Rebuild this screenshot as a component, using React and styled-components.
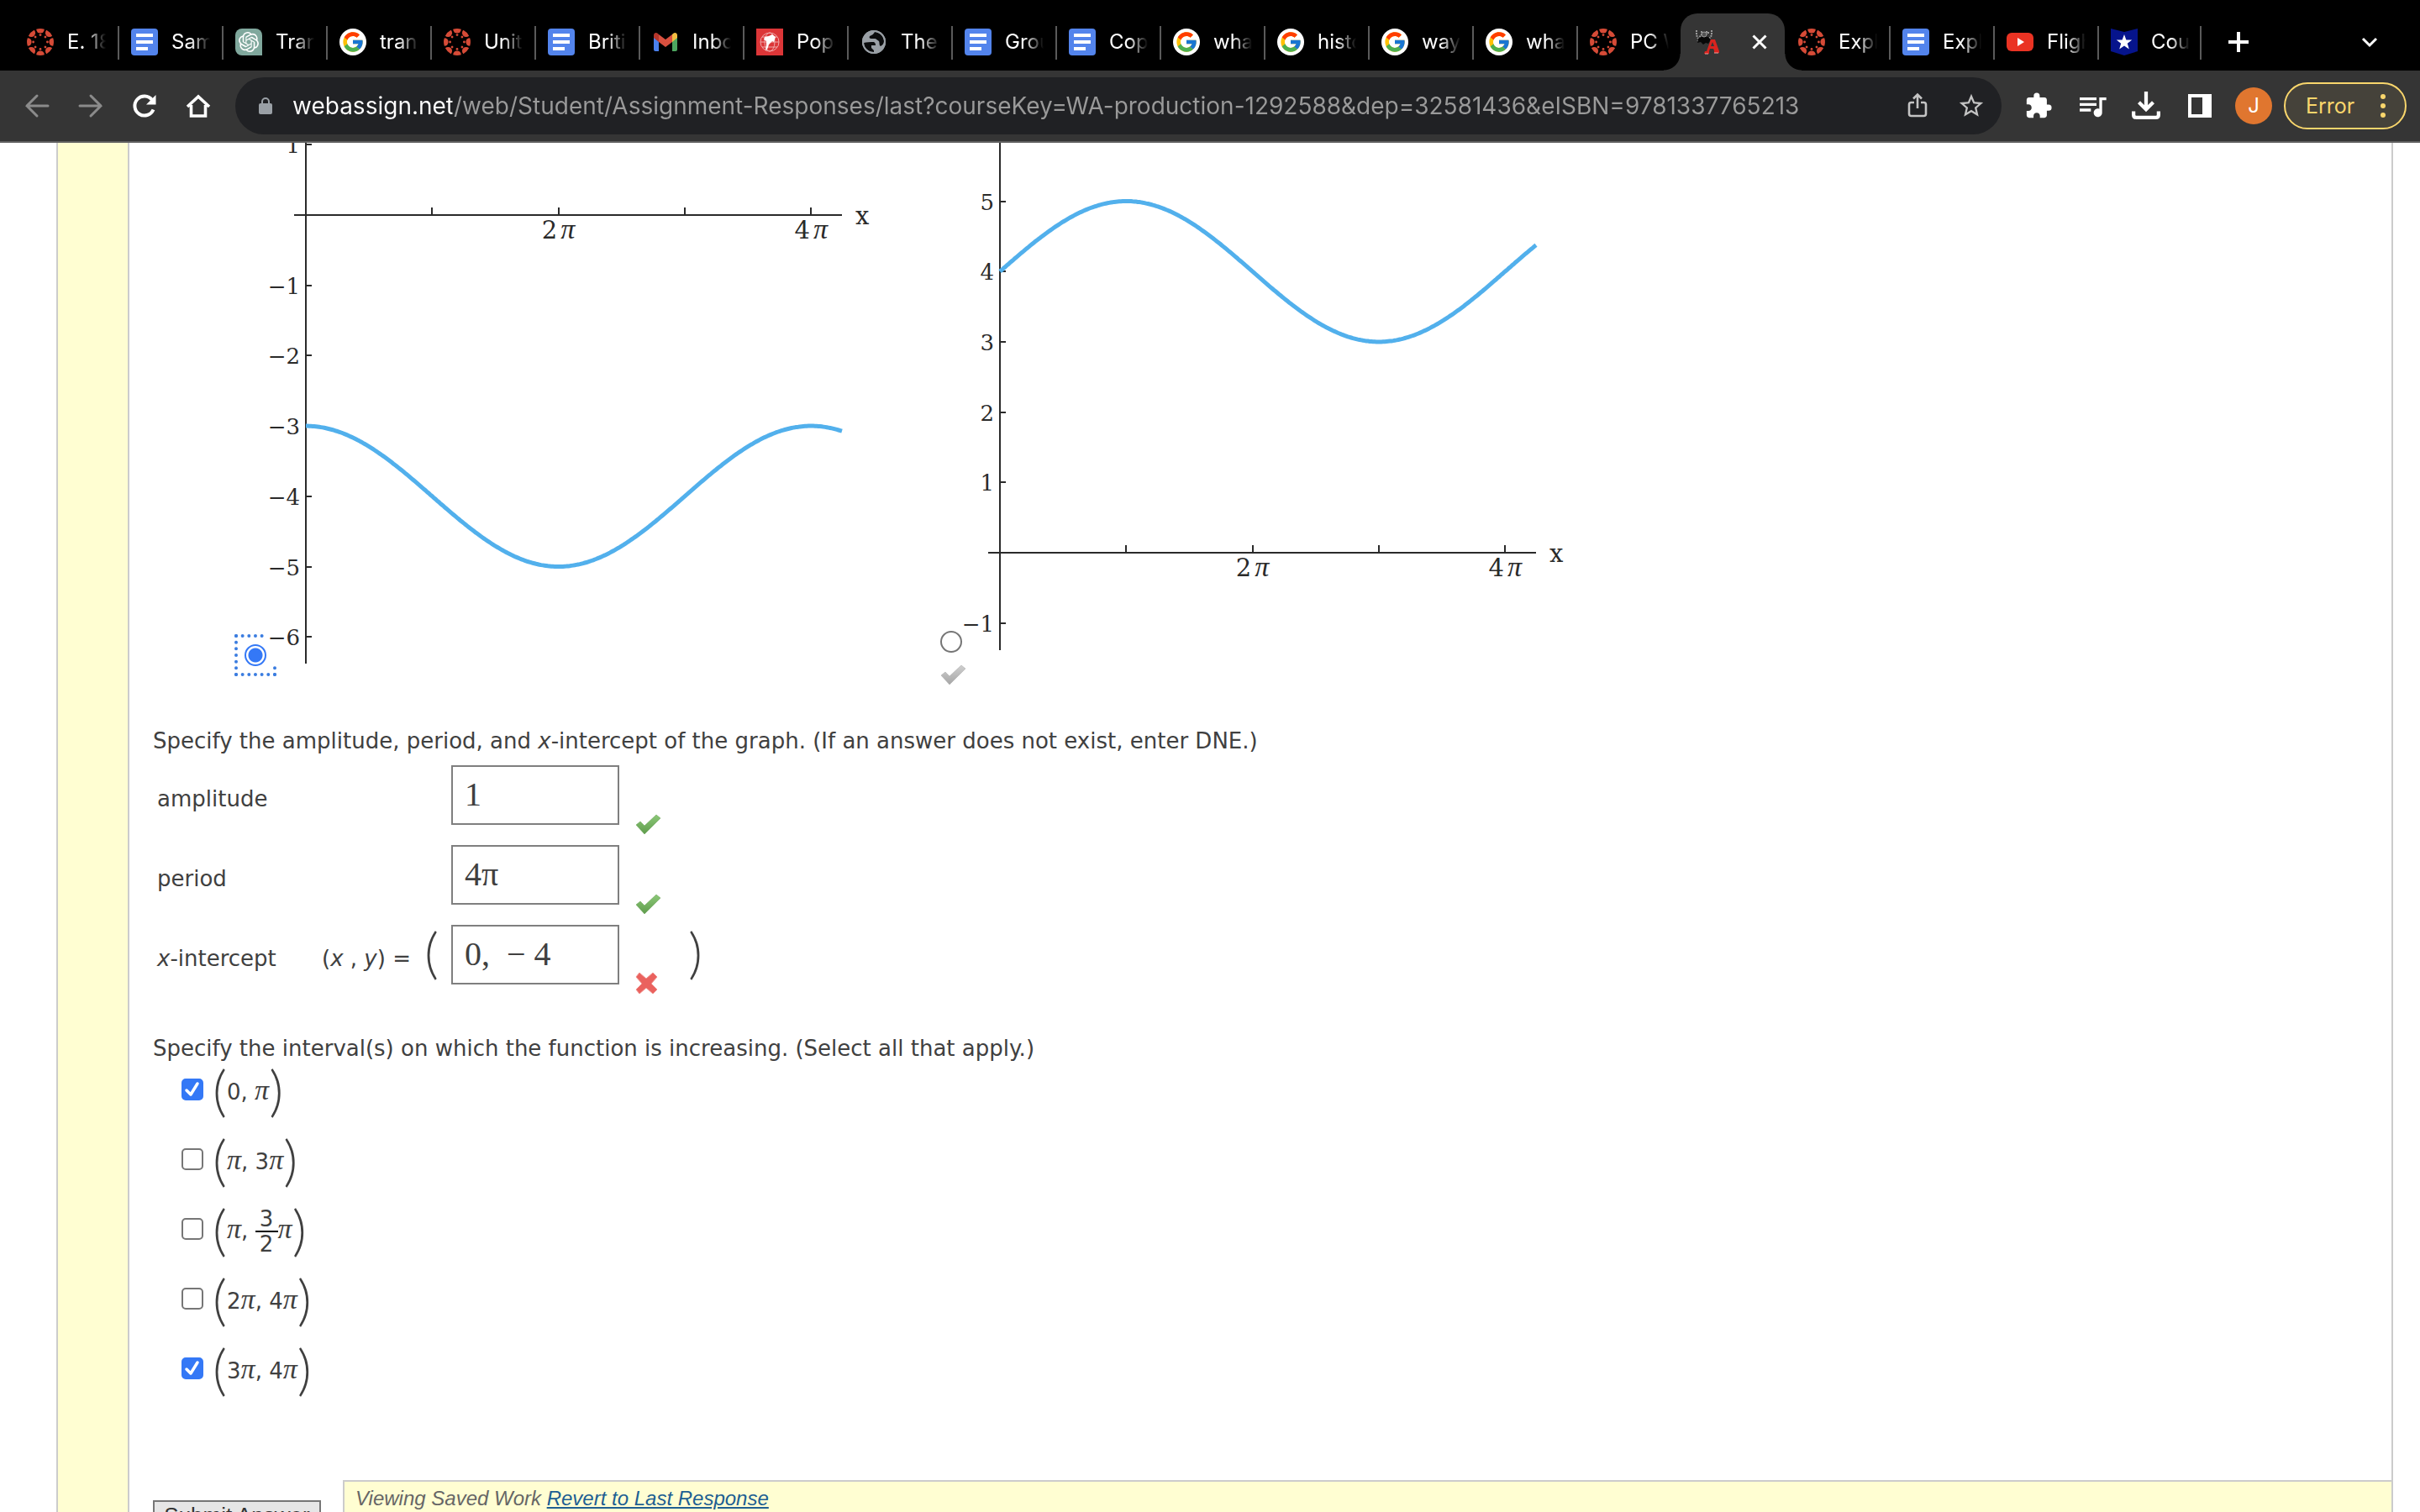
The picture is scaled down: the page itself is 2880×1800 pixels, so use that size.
import React, { useId } from "react";
import styled, { createGlobalStyle } from "styled-components";
import { FcGoogle } from "react-icons/fc";
import { SiOpenai } from "react-icons/si";
import { MdExtension, MdQueueMusic, MdStarBorder } from "react-icons/md";

const UI_FONT = `Inter, Roboto, sans-serif`;
const TEXT_FONT = `"DejaVu Sans", Verdana, sans-serif`;
const MATH_FONT = `"Liberation Serif", "Times New Roman", serif`;
const PAREN_FONT = `Lato, "Liberation Serif", serif`;

const TABS = [
    { icon: "canvas", title: "E. 18" },
    { icon: "docs", title: "Sam" },
    { icon: "openai", title: "Tran" },
    { icon: "google", title: "tran" },
    { icon: "canvas", title: "Unit" },
    { icon: "docs", title: "Briti" },
    { icon: "gmail", title: "Inbo" },
    { icon: "atlas", title: "Popo" },
    { icon: "globe", title: "The" },
    { icon: "docs", title: "Grou" },
    { icon: "docs", title: "Cop" },
    { icon: "google", title: "wha" },
    { icon: "google", title: "histo" },
    { icon: "google", title: "way" },
    { icon: "google", title: "wha" },
    { icon: "canvas", title: "PC W" },
    { icon: "webassign", active: true },
    { icon: "canvas", title: "Expl" },
    { icon: "docs", title: "Expl" },
    { icon: "youtube", title: "Fligh" },
    { icon: "star", title: "Cou" },
];

const URL =
    "webassign.net/web/Student/Assignment-Responses/last?courseKey=WA-production-1292588&dep=32581436&eISBN=9781337765213";

/* ---------- favicons ---------- */

const CanvasIcon = () => (
    <svg width="32" height="32" viewBox="0 0 32 32" fill="#d64b37">
        {[0, 45, 90, 135, 180, 225, 270, 315].map((angle) => (
            <g key={angle} transform={`rotate(${angle} 16 16)`}>
                <path d="M11.2 .8A16 16 0 0 1 20.8 .8A4.8 4.8 0 0 1 11.2 .8Z" />
                <circle cx="16" cy="7.6" r="1.4" />
            </g>
        ))}
    </svg>
);

const DocsIcon = () => (
    <svg width="32" height="32" viewBox="0 0 32 32">
        <rect width="32" height="32" rx="4" fill="#5384ec" />
        <path d="M6 6h20v4H6zM6 14h20v4H6zM6 22h14v4H6z" fill="#fff" />
    </svg>
);

const OpenAiIcon = () => (
    <svg width="32" height="32" viewBox="0 0 32 32">
        <path d="M8 0h16a8 8 0 0 1 8 8v24H8a8 8 0 0 1-8-8V8a8 8 0 0 1 8-8z" fill="#80a89d" />
        <SiOpenai x="4" y="4" size="24" color="#fff" />
    </svg>
);

const GoogleIcon = () => (
    <svg width="32" height="32" viewBox="0 0 32 32">
        <circle cx="16" cy="16" r="16" fill="#fff" />
        <FcGoogle x="2" y="2" size="28" />
    </svg>
);

const GmailIcon = () => (
    <svg width="32" height="32" viewBox="0 0 32 32">
        <path d="M2 9v16a2 2 0 0 0 2 2h4V13z" fill="#4a80ed" />
        <path d="M30 9v16a2 2 0 0 1-2 2h-4V13z" fill="#4da660" />
        <path d="M24 7v9l6-5V8c0-3-3-4-5-2z" fill="#f3bd42" />
        <path d="M8 7v9l8 6 8-6V7l-8 6z" fill="#d8503f" />
        <path d="M2 8v3l6 5V7L7 6C5 4 2 5 2 8z" fill="#b5362b" />
    </svg>
);

const AtlasIcon = () => (
    <svg width="32" height="32" viewBox="0 0 32 32" fill="none" stroke="#f0a9aa">
        <rect width="32" height="32" fill="#dc3638" stroke="none" />
        <circle cx="16" cy="16" r="11" />
        <ellipse cx="16" cy="16" rx="6" ry="11" />
        <path d="M5 16h22M7 10h18M7 22h18" />
        <path d="M10 10l5-1 4-2 4 3-2 6-2-1-4 4-2 6-2 1 1-6v-5l-3-2z" fill="#fff" stroke="none" />
    </svg>
);

const GlobeIcon = () => (
    <svg width="32" height="32" viewBox="0 0 32 32">
        <circle cx="16" cy="16" r="14" fill="#9aa0a6" />
        <path
            d="M4 17c3-1 8-1 12-1 2 1 2 3 2 4h-5v3l3 3v2C9 28 4 23 4 17zM17 4c-1 2-3 4-6 5-1 2 0 3 2 3h4c2 0 3 2 5 3 1 2 0 5 2 6 2-1 4-3 4-6 0-6-5-11-11-11z"
            fill="#0b0c0d"
        />
        <circle cx="16" cy="16" r="13" fill="none" stroke="#9aa0a6" strokeWidth="2" />
    </svg>
);

const WebAssignIcon = () => (
    <svg width="32" height="32" viewBox="0 0 32 32">
        <path
            d="M3 2v6l2 4M9 3v4l-3 4M15 3v4M21 2v6l-3 4M17 4v3M4 15l3-2M18 14l2-2"
            stroke="#9a9a9a"
            strokeWidth="2"
            strokeDasharray="2 1"
            fill="none"
        />
        <path d="M5 12l5-3 7 1 3 3-3 5-3-1-3 2-3-3-4 1z" fill="#080808" />
        <circle cx="12" cy="7" r="3" fill="#555" stroke="#999" />
        <path d="M12 30l1-3h2l5-14h5l5 14v2h-6v-3l-1-2h-4l-1 3v3z" fill="#d8241f" />
        <path d="M20 21l2-5 2 5z" fill="#353535" />
        <path d="M24 29h5M13 30h4" stroke="#f0a3a0" strokeWidth="1" fill="none" />
    </svg>
);

const YoutubeIcon = () => (
    <svg width="32" height="32" viewBox="0 0 32 32">
        <rect y="5" width="32" height="22" rx="6" fill="#ea3323" />
        <path d="M13 11l8 5-8 5z" fill="#fff" />
    </svg>
);

const StarFlagIcon = () => (
    <svg width="32" height="32" viewBox="0 0 32 32">
        <path d="M0 0l16 4L32 0v27l-16 5-16-5z" fill="#06148c" />
        <path d="M16 7l2.4 6.6h6.8l-5.4 4.2 2 6.8-5.8-4-5.8 4 2-6.8-5.4-4.2h6.8z" fill="#fff" />
    </svg>
);

const FAVICONS = {
    canvas: CanvasIcon,
    docs: DocsIcon,
    openai: OpenAiIcon,
    google: GoogleIcon,
    gmail: GmailIcon,
    atlas: AtlasIcon,
    globe: GlobeIcon,
    webassign: WebAssignIcon,
    youtube: YoutubeIcon,
    star: StarFlagIcon,
};

/* ---------- toolbar icons ---------- */

const LineIcon = ({ size = 32, width = 3, children }) => (
    <svg
        width={size}
        height={size}
        viewBox="0 0 32 32"
        fill="none"
        stroke="currentColor"
        strokeWidth={width}
    >
        {children}
    </svg>
);

const BackIcon = () => (
    <LineIcon>
        <path d="M29 16H4M16 4L4 16l12 12" strokeLinecap="round" />
    </LineIcon>
);

const ForwardIcon = () => (
    <LineIcon>
        <path d="M3 16h25M16 4l12 12-12 12" strokeLinecap="round" />
    </LineIcon>
);

const ReloadIcon = () => (
    <LineIcon width={4}>
        <path d="M26.500 20.500A11.500 11.500 0 1 1 25 9" />
        <path d="M29.500 3v11.500H18z" fill="currentColor" stroke="none" />
    </LineIcon>
);

const HomeIcon = () => (
    <LineIcon>
        <path d="M3 17L16 5l13 12M7.500 15v13h17V15" strokeWidth="3.600" />
    </LineIcon>
);

const LockIcon = () => (
    <svg width="16" height="22" viewBox="0 0 16 22">
        <rect y="8" width="16" height="13" rx="2" fill="#9aa0a6" />
        <path d="M4 9V6a4 4 0 0 1 8 0v3" fill="none" stroke="#9aa0a6" strokeWidth="2" />
    </svg>
);

const ShareIcon = () => (
    <LineIcon>
        <path d="M12 12H8.500Q6 12 6 14.500v11Q6 28 8.500 28h15q2.500 0 2.500-2.500v-11Q26 12 23.500 12H20M16 19V3M11 7.500l5-5 5 5" strokeWidth="2.600" />
    </LineIcon>
);

const DownloadIcon = () => (
    <LineIcon size={34} width={4}>
        <path d="M16 0v19M8 12l8 8 8-8M2 22v4q0 3 3 3h22q3 0 3-3v-4" />
    </LineIcon>
);

const PanelIcon = () => (
    <svg width="28" height="28" viewBox="0 0 28 28">
        <path d="M0 0h28v28H0zM4 4v20h13V4z" fill="currentColor" fillRule="evenodd" />
    </svg>
);

/* ---------- answer marks ---------- */

const CheckMark = ({ from, to }) => {
    const id = useId();
    return (
        <svg width="31" height="25" viewBox="0 0 31 25">
            <linearGradient id={id} x1="0" y1="0" x2="0" y2="1">
                <stop offset="0" stopColor={from} />
                <stop offset="1" stopColor={to} />
            </linearGradient>
            <path
                d="M1 13l5-4 5 5L25 1l5 4-19 19z"
                fill={`url(#${id})`}
                stroke={to}
                strokeOpacity=".5"
                strokeLinejoin="round"
            />
        </svg>
    );
};

const CrossMark = () => (
    <svg width="31" height="27" viewBox="0 0 31 27">
        <path
            d="M5 1l8 7 8-7 5 5-7 8 7 7-5 5-8-7-8 7-4-5 7-7-7-8z"
            fill="#ea625e"
            stroke="#f0908c"
            strokeLinejoin="round"
        />
    </svg>
);

/* ---------- graphs ---------- */

const UNIT_X = 150.3; // px per pi
const UNIT_Y = 83.7;
const RUN = 638;

const Graph = ({ height, axisX, zeroY, labels, fn, title }) => {
    const curve = [];
    for (let px = 0; px <= RUN; px += 2) {
        const y = fn((px / UNIT_X) * Math.PI);
        curve.push(`${axisX + px},${(zeroY - y * UNIT_Y).toFixed(1)}`);
    }
    return (
        <GraphBox width="730" height={height} role="img" aria-label={title}>
            <g stroke="#2a2a2a" strokeWidth="2">
                <line x1={axisX} y1="0" x2={axisX} y2={height - 3} />
                <line x1={axisX - 14} y1={zeroY} x2={axisX + RUN} y2={zeroY} />
                {[1, 2, 3, 4].map((n) => (
                    <line
                        key={n}
                        x1={Math.round(axisX + n * UNIT_X)}
                        x2={Math.round(axisX + n * UNIT_X)}
                        y1={zeroY - 9}
                        y2={zeroY}
                    />
                ))}
                {labels.map((n) => {
                    const y = Math.round(zeroY - n * UNIT_Y);
                    return <line key={n} x1={axisX} x2={axisX + 7} y1={y} y2={y} />;
                })}
            </g>
            <polyline points={curve.join(" ")} fill="none" stroke="#52b0ec" strokeWidth="5" />
            {labels.map((n) => (
                <YLabel key={n} x={axisX - 7} y={Math.round(zeroY - n * UNIT_Y) + 10} textAnchor="end">
                    {n < 0 ? `−${-n}` : n}
                </YLabel>
            ))}
            {[2, 4].map((n) => (
                <XLabel key={n} x={axisX + n * UNIT_X} y={zeroY + 28} textAnchor="middle">
                    {n}
                    <PiSpan dx="4">π</PiSpan>
                </XLabel>
            ))}
            <XLabel x={axisX + RUN + 16} y={zeroY + 11}>
                x
            </XLabel>
        </GraphBox>
    );
};

/* ---------- page ---------- */

const Pi = () => <PiSign>π</PiSign>;

const INTERVALS = [
    { id: "i1", checked: true, body: <>0, <Pi /></> },
    { id: "i2", checked: false, body: <><Pi />, 3<Pi /></> },
    {
        id: "i3",
        checked: false,
        body: (
            <>
                <Pi />,{" "}
                <Fraction>
                    <span>3</span>
                    <span>2</span>
                </Fraction>
                <Pi />
            </>
        ),
    },
    { id: "i4", checked: false, body: <>2<Pi />, 4<Pi /></> },
    { id: "i5", checked: true, body: <>3<Pi />, 4<Pi /></> },
];

const BrowserTab = ({ icon, title, active }) => {
    const Icon = FAVICONS[icon];
    return (
        <TabItem $active={active}>
            <Icon />
            {active ? (
                <TabClose type="button" aria-label="Close tab">
                    <LineIcon size={24} width={4}>
                        <path d="M6 6l20 20M26 6L6 26" />
                    </LineIcon>
                </TabClose>
            ) : (
                <TabTitle>{title}</TabTitle>
            )}
        </TabItem>
    );
};

const App = () => (
    <Window>
        <GlobalStyle />
        <TabStrip>
            {TABS.map((tab, i) => (
                <BrowserTab key={i} {...tab} />
            ))}
            <NewTab type="button" aria-label="New tab">
                <LineIcon>
                    <path d="M16 4v24M4 16h24" strokeWidth="4" />
                </LineIcon>
            </NewTab>
            <TabSearch type="button" aria-label="Search tabs">
                <LineIcon>
                    <path d="M8 12l8 8 8-8" />
                </LineIcon>
            </TabSearch>
        </TabStrip>

        <Toolbar>
            <ToolButton type="button" aria-label="Back" $dim><BackIcon /></ToolButton>
            <ToolButton type="button" aria-label="Forward" $dim><ForwardIcon /></ToolButton>
            <ToolButton type="button" aria-label="Reload"><ReloadIcon /></ToolButton>
            <ToolButton type="button" aria-label="Home"><HomeIcon /></ToolButton>
            <AddressBar>
                <LockIcon />
                <AddressInput type="text" aria-label="Address" defaultValue={URL} />
                <ToolButton type="button" aria-label="Share" $soft><ShareIcon /></ToolButton>
                <ToolButton type="button" aria-label="Bookmark" $soft><MdStarBorder size="34" /></ToolButton>
            </AddressBar>
            <ToolButton type="button" aria-label="Extensions"><MdExtension size="34" /></ToolButton>
            <ToolButton type="button" aria-label="Media"><MdQueueMusic size="40" /></ToolButton>
            <ToolButton type="button" aria-label="Downloads"><DownloadIcon /></ToolButton>
            <ToolButton type="button" aria-label="Side panel"><PanelIcon /></ToolButton>
            <ToolButton type="button" aria-label="Profile"><Avatar>J</Avatar></ToolButton>
            <ErrorButton type="button">
                Error
                <svg width="8" height="32" viewBox="0 0 8 32" fill="currentColor">
                    <circle cx="4" cy="5" r="3" />
                    <circle cx="4" cy="16" r="3" />
                    <circle cx="4" cy="27" r="3" />
                </svg>
            </ErrorButton>
        </Toolbar>

        <Page>
            <Gutter />
            <Question>
                <Options>
                    <Option>
                        <OptionRow>
                            <RadioFrame $focused>
                                <Radio type="radio" name="graph" aria-label="Graph A" defaultChecked />
                            </RadioFrame>
                            <Graph
                                title="Cosine curve around -4"
                                height={623}
                                axisX={47}
                                zeroY={86}
                                labels={[1, -1, -2, -3, -4, -5, -6]}
                                fn={(x) => Math.cos(x / 2) - 4}
                            />
                        </OptionRow>
                    </Option>
                    <Option>
                        <OptionRow>
                            <RadioFrame>
                                <Radio type="radio" name="graph" aria-label="Graph B" />
                            </RadioFrame>
                            <Graph
                                title="Sine curve around 4"
                                height={607}
                                axisX={45}
                                zeroY={488}
                                labels={[5, 4, 3, 2, 1, -1]}
                                fn={(x) => Math.sin(x / 2) + 4}
                            />
                        </OptionRow>
                        <CheckMark from="#cfcfcf" to="#a6a6a6" />
                    </Option>
                </Options>

                <Prompt>
                    Specify the amplitude, period, and <i>x</i>-intercept of the graph. (If an answer
                    does not exist, enter DNE.)
                </Prompt>
                <Fields>
                    <Field>
                        <FieldLabel htmlFor="amplitude">amplitude</FieldLabel>
                        <Equation />
                        <Paren />
                        <Answer id="amplitude" defaultValue="1" />
                        <CheckMark from="#8cc878" to="#5f9c4c" />
                    </Field>
                    <Field>
                        <FieldLabel htmlFor="period">period</FieldLabel>
                        <Equation />
                        <Paren />
                        <Answer id="period" defaultValue="4π" />
                        <CheckMark from="#8cc878" to="#5f9c4c" />
                    </Field>
                    <Field>
                        <FieldLabel htmlFor="intercept"><i>x</i>-intercept</FieldLabel>
                        <Equation>(<i>x</i> , <i>y</i>) =</Equation>
                        <Paren>(</Paren>
                        <Answer id="intercept" defaultValue="0,  − 4" />
                        <CrossMark />
                        <Paren>)</Paren>
                    </Field>
                </Fields>

                <IntervalPrompt>
                    Specify the interval(s) on which the function is increasing. (Select all that
                    apply.)
                </IntervalPrompt>
                <Intervals>
                    {INTERVALS.map(({ id, checked, body }) => (
                        <Interval key={id}>
                            <Checkbox id={id} type="checkbox" defaultChecked={checked} />
                            <IntervalLabel htmlFor={id}>
                                <BigParen>(</BigParen>
                                <IntervalBody>{body}</IntervalBody>
                                <BigParen>)</BigParen>
                            </IntervalLabel>
                        </Interval>
                    ))}
                </Intervals>

                <SubmitBar>
                    <SubmitButton type="button">Submit Answer</SubmitButton>
                    <SavedNote>
                        Viewing Saved Work <a href="#last">Revert to Last Response</a>
                    </SavedNote>
                </SubmitBar>
            </Question>
        </Page>
    </Window>
);

export default App;

const GlobalStyle = createGlobalStyle`
    *, *::before, *::after {
        box-sizing: border-box;
    }
    body {
        margin: 0;
        background: #fff;
        overflow: hidden;
    }
    button, input {
        margin: 0;
        padding: 0;
        border: 0;
        background: none;
        font: inherit;
        color: inherit;
    }
    svg {
        display: block;
        flex-shrink: 0;
    }
`;

const Window = styled.div`
    display: flex;
    flex-direction: column;
    height: 100vh;
    font-family: ${UI_FONT};
`;

const TabStrip = styled.header`
    display: flex;
    align-items: flex-end;
    height: 84px;
    padding: 16px 16px 0;
    background: #000;
    color: #fff;
`;

const TabItem = styled.div`
    position: relative;
    display: flex;
    align-items: center;
    gap: 16px;
    flex: 0 1 124px;
    min-width: 0;
    height: 68px;
    padding: 0 14px 0 16px;
    border-radius: 20px 20px 0 0;
    background: ${({ $active }) => ($active ? "#353535" : "none")};

    /* divider on the left of each tab */
    & + &::before {
        content: "";
        position: absolute;
        left: 0;
        top: 15px;
        width: 2px;
        height: 40px;
        background: #5a5a5a;
    }

    ${({ $active }) =>
        $active &&
        `
        && {
            padding-right: 18px;
            justify-content: space-between;
        }
        &&::before, &&::after {
            content: "";
            position: absolute;
            left: -20px;
            top: auto;
            bottom: 0;
            width: 20px;
            height: 20px;
            background: radial-gradient(circle at 0 0, transparent 19px, #353535 20px);
        }
        &&::after {
            left: 100%;
            background: radial-gradient(circle at 100% 0, transparent 19px, #353535 20px);
        }
        & + div::before {
            display: none;
        }
    `}

    &:nth-last-child(3)::after {
        content: "";
        position: absolute;
        right: 0;
        top: 15px;
        width: 2px;
        height: 40px;
        background: #5a5a5a;
    }
`;

const TabTitle = styled.span`
    flex: 1;
    min-width: 0;
    overflow: hidden;
    white-space: nowrap;
    font-size: 24px;
    line-height: 32px;
    mask-image: linear-gradient(90deg, #000 50%, transparent);
`;

const TabClose = styled.button`
    display: flex;
`;

const NewTab = styled.button`
    display: flex;
    margin: 0 auto 18px 28px;
`;

const TabSearch = styled.button`
    display: flex;
    margin: 0 28px 18px 0;
`;

const Toolbar = styled.nav`
    display: flex;
    align-items: center;
    height: 86px;
    padding: 0 16px 0 12px;
    background: #353535;
    border-bottom: 2px solid #5f5f5f;
    color: #fff;
`;

const ToolButton = styled.button`
    display: flex;
    align-items: center;
    justify-content: center;
    flex: 0 0 64px;
    height: 64px;
    color: ${({ $dim, $soft }) => ($dim ? "#8b8b8b" : $soft ? "#c4c4c4" : "#fff")};
`;

const AddressBar = styled.div`
    display: flex;
    align-items: center;
    flex: 1;
    min-width: 0;
    height: 68px;
    margin: 0 12px;
    padding: 0 4px 0 28px;
    border-radius: 34px;
    background: #202124;
`;

const AddressInput = styled.input`
    flex: 1;
    min-width: 0;
    margin-left: 24px;
    font-size: 28px;
    line-height: 36px;
    color: #9a9a9a;
    background: linear-gradient(90deg, #fff 190px, #9a9a9a 190px);
    background-clip: text;
    -webkit-text-fill-color: transparent;
`;

const Avatar = styled.span`
    width: 44px;
    height: 44px;
    border-radius: 50%;
    background: #e0762f;
    font-size: 24px;
    line-height: 44px;
    text-align: center;
`;

const ErrorButton = styled.button`
    display: flex;
    align-items: center;
    justify-content: space-between;
    width: 146px;
    height: 56px;
    margin-left: 4px;
    padding: 0 22px 0 24px;
    border: 2px solid #f9d66c;
    border-radius: 28px;
    background: #45423a;
    color: #f9d66c;
    font-size: 25px;
`;

const Page = styled.main`
    display: flex;
    flex: 1;
    min-height: 0;
    overflow: hidden;
    margin: 0 32px 0 67px;
    border: solid #ccc;
    border-width: 0 2px;
    color: #404040;
    font-family: ${TEXT_FONT};
    font-size: 26px;
    line-height: 32px;
`;

const Gutter = styled.div`
    flex: 0 0 85px;
    background: #fffed2;
    border-right: 2px solid #ccc;
`;

const Question = styled.div`
    flex: 1;
    min-width: 0;
    padding-left: 28px;
`;

const Options = styled.div`
    display: flex;
    align-items: flex-start;
    padding: 0 0 50px 109px;
`;

const Option = styled.div`
    display: flex;
    flex-direction: column;
    gap: 14px;
    flex: 0 0 828px;
`;

const OptionRow = styled.div`
    display: flex;
    align-items: flex-end;
`;

const GraphBox = styled.svg`
    position: relative;
    overflow: hidden;
    background: #fff;
    fill: #2a2a2a;
`;

const YLabel = styled.text`
    font-family: "DejaVu Serif", serif;
    font-size: 26px;
`;

const XLabel = styled.text`
    font-family: "DejaVu Serif", serif;
    font-size: 29px;
`;

const PiSpan = styled.tspan`
    font-family: ${MATH_FONT};
    font-size: 34px;
    font-style: italic;
`;

/* focus ring runs under the graph next to it */
const RadioFrame = styled.span`
    display: flex;
    flex-shrink: 0;
    outline: ${({ $focused }) => ($focused ? "4px dotted #3b7de0" : "none")};
    outline-offset: 8px;
`;

const Radio = styled.input`
    appearance: none;
    width: 26px;
    height: 26px;
    border: 2px solid #767676;
    border-radius: 50%;

    &:checked {
        border-color: #3478f6;
        background: radial-gradient(circle, #3478f6 8px, #fff 9px);
    }
`;

const Prompt = styled.p`
    margin: 0;
`;

const Fields = styled.div`
    display: flex;
    flex-direction: column;
    gap: 12px;
    padding: 13px 0 0 5px;
`;

const Field = styled.div`
    display: flex;
    align-items: flex-end;
    height: 83px;
`;

const FieldLabel = styled.label`
    width: 196px;
    margin-bottom: 27px;
`;

const Equation = styled.span`
    width: 122px;
    height: 32px;
    margin-bottom: 27px;
    white-space: nowrap;
`;

const Paren = styled.span`
    width: 32px;
    height: 83px;
    font-family: ${PAREN_FONT};
    font-size: 66px;
    font-weight: 300;
    line-height: 64px;

    &:last-child {
        margin-left: 32px;
    }
`;

const Answer = styled.input`
    align-self: flex-start;
    width: 200px;
    height: 71px;
    margin-right: 19px;
    padding: 0 14px 2px;
    border: 2px solid #7f7f7f;
    font-family: ${MATH_FONT};
    font-size: 40px;
`;

const IntervalPrompt = styled(Prompt)`
    margin-top: 48px;
`;

const Intervals = styled.div`
    display: flex;
    flex-direction: column;
    gap: 23px;
    padding: 6px 0 0 34px;
`;

const Interval = styled.div`
    display: flex;
    align-items: center;
    gap: 11px;
    height: 60px;
`;

const Checkbox = styled.input`
    appearance: none;
    width: 26px;
    height: 26px;
    margin-bottom: 6px;
    border: 2px solid #767676;
    border-radius: 5px;

    &:checked {
        border-color: #3478f6;
        background: #3478f6
            url("data:image/svg+xml,%3Csvg xmlns='http://www.w3.org/2000/svg' viewBox='0 0 22 22'%3E%3Cpath d='M4 12l5 5 8-13' fill='none' stroke='white' stroke-width='3.500' stroke-linecap='round' stroke-linejoin='round'/%3E%3C/svg%3E")
            center / 22px no-repeat;
    }
`;

const IntervalLabel = styled.label`
    display: flex;
    align-items: center;
`;

const BigParen = styled.span`
    height: 60px;
    font-family: ${PAREN_FONT};
    font-size: 66px;
    font-weight: 300;
    line-height: 54px;
`;

const IntervalBody = styled.span`
    white-space: pre;
`;

const PiSign = styled.i`
    font-family: ${MATH_FONT};
    font-size: 34px;
    line-height: 26px;
`;

function Fraction({ children }) {
    return <FractionBox>{children}</FractionBox>;
}

const FractionBox = styled.span`
    display: inline-flex;
    flex-direction: column;
    vertical-align: middle;
    width: 27px;
    text-align: center;
    line-height: 28px;

    span + span {
        border-top: 2px solid #000;
    }
`;

const SubmitBar = styled.div`
    display: flex;
    align-items: flex-start;
    margin-top: 100px;
    font-family: "Liberation Sans", Arial, sans-serif;
`;

const SubmitButton = styled.button`
    width: 200px;
    height: 36px;
    margin: 24px 26px 0 0;
    border: 2px solid #767676;
    background: #e6e6e6;
    color: #333;
    font-size: 26px;
    line-height: 32px;
`;

const SavedNote = styled.div`
    flex: 1;
    height: 80px;
    padding: 6px 13px;
    border: solid #ccc;
    border-width: 2px 0 0 2px;
    background: #fffed2;
    color: #666;
    font-size: 24px;
    font-style: italic;
    line-height: 28px;

    a {
        color: #205f92;
    }
`;
